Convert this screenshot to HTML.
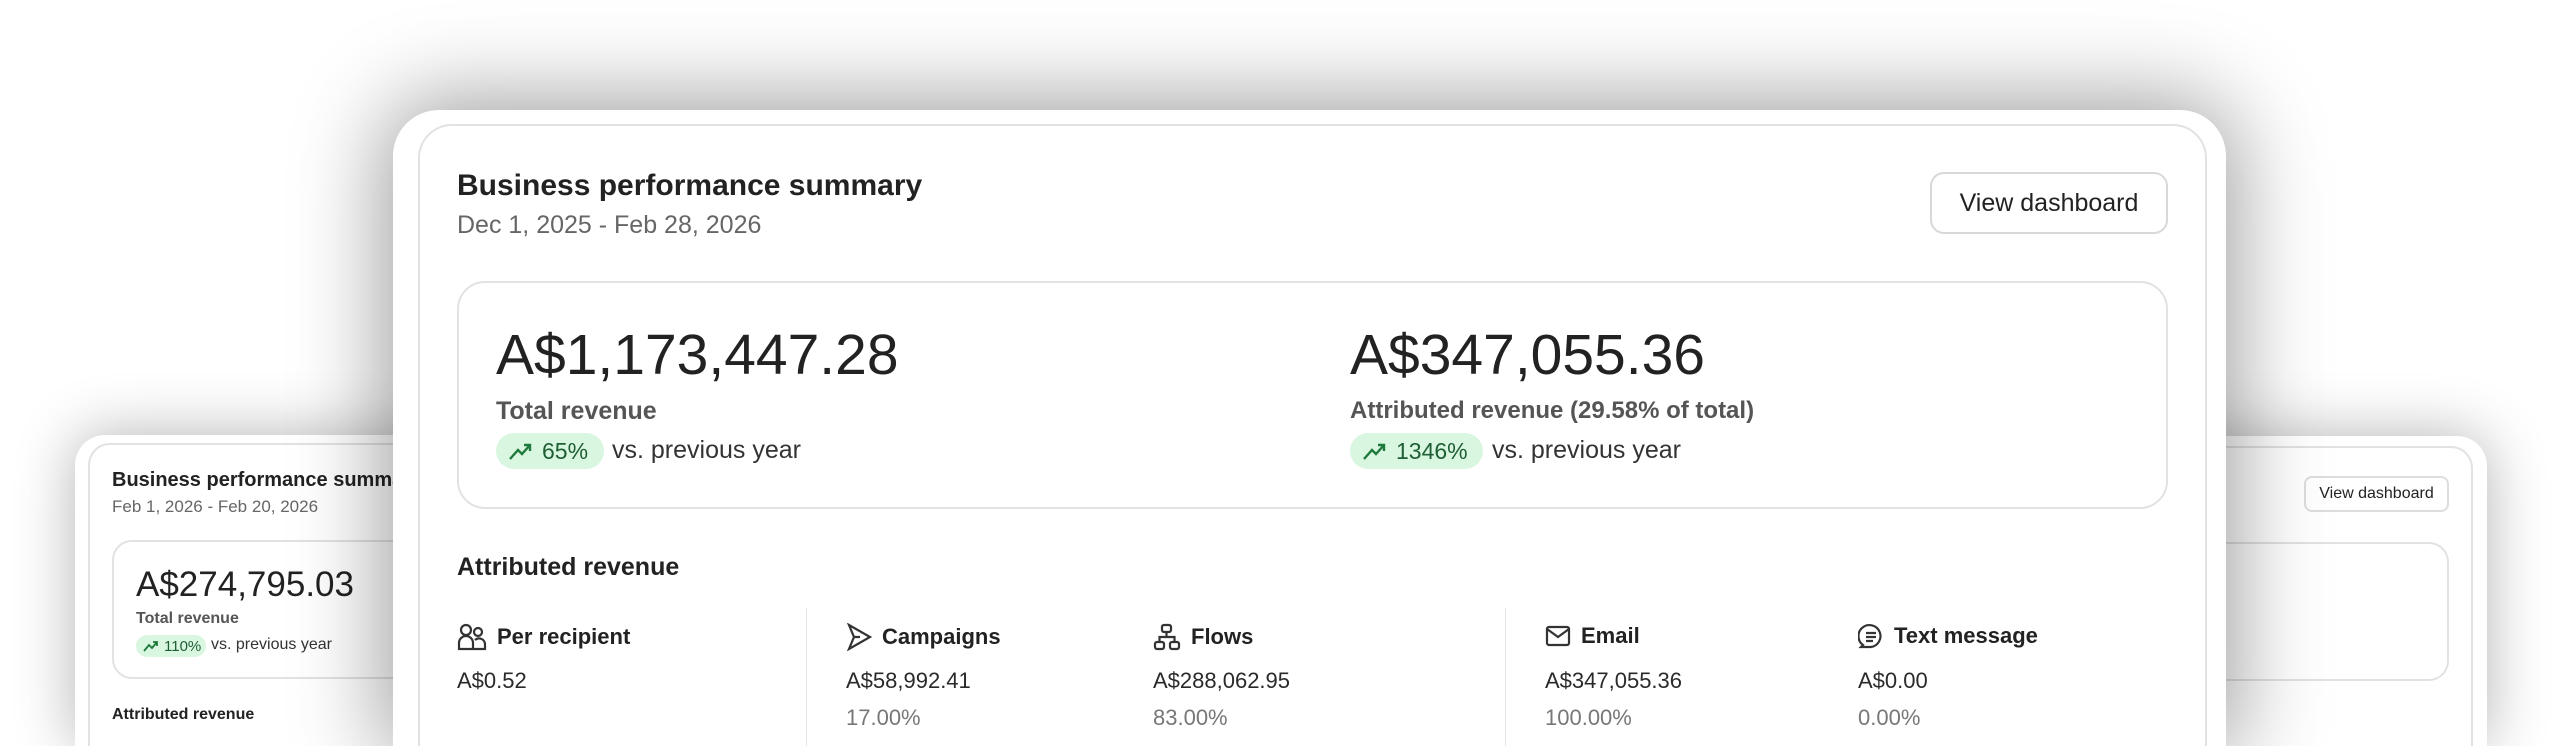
<!DOCTYPE html>
<html><head><meta charset="utf-8"><style>
*{box-sizing:border-box;margin:0;padding:0}
html,body{width:2560px;height:746px;overflow:hidden;background:#fff}
body{font-family:"Liberation Sans",sans-serif;color:#1f1f1f}
#wrap{position:relative;width:2560px;height:746px;overflow:hidden}
.card{position:absolute;background:#fff;border-radius:46px 46px 0 0;}
.inner{position:absolute;border:2px solid #e2e2e2;border-radius:34px;background:#fff}
.innerb{position:absolute;border:2px solid #e2e2e2;border-bottom:none;border-radius:34px 34px 0 0;background:#fff}
.abs{position:absolute;white-space:nowrap}
.pill{position:absolute;background:#d9f6e1;border-radius:20px;color:#1e5e33;display:flex;align-items:center}
.lbl{position:absolute;display:flex;align-items:center;gap:10px;font-size:22px;font-weight:bold;color:#222;white-space:nowrap}
.val{position:absolute;font-size:22px;color:#2a2a2a;white-space:nowrap}
.pct{position:absolute;font-size:22px;color:#777;white-space:nowrap}
</style></head><body><div id="wrap">

<!-- left back card -->
<div class="card" style="left:75px;top:435px;width:700px;height:311px;border-radius:30px 30px 0 0;box-shadow:0 0 60px rgba(0,0,0,0.3);z-index:1">
  <div class="innerb" style="left:13px;top:8px;right:0;bottom:0;border-radius:22px 22px 0 0"></div>
  <div class="abs" style="left:37px;top:34px;font-size:20px;font-weight:bold;color:#222">Business performance summary</div>
  <div class="abs" style="left:37px;top:62px;font-size:17px;color:#666">Feb 1, 2026 - Feb 20, 2026</div>
  <div class="inner" style="left:37px;top:105px;width:600px;height:139px;border-radius:20px"></div>
  <div class="abs" style="left:61px;top:130px;font-size:35px;color:#222">A$274,795.03</div>
  <div class="abs" style="left:61px;top:175px;font-size:16px;color:#555;font-weight:bold">Total revenue</div>
  <div class="pill" style="left:61px;top:200px;width:70px;height:22px;font-size:15px;padding-left:6px">
    <svg width="18" height="14" viewBox="0 0 18 14"><path d="M2 12 L7 6 L10 9 L15 3 M11 3 H15 V7" stroke="#1e7a3c" stroke-width="1.8" fill="none"/></svg><span style="margin-left:4px">110%</span></div>
  <div class="abs" style="left:136px;top:201px;font-size:16px;color:#333">vs. previous year</div>
  <div class="abs" style="left:37px;top:271px;font-size:16px;font-weight:bold;color:#222">Attributed revenue</div>
</div>

<!-- right back card -->
<div class="card" style="left:1800px;top:436px;width:687px;height:310px;border-radius:30px 30px 0 0;box-shadow:0 0 60px rgba(0,0,0,0.3);z-index:1">
  <div class="innerb" style="left:0;top:10px;right:14px;bottom:0;border-radius:22px 22px 0 0"></div>
  <div class="abs" style="left:504px;top:40px;width:145px;height:36px;border:2px solid #ddd;border-radius:8px;font-size:16px;color:#222;display:flex;align-items:center;justify-content:center">View dashboard</div>
  <div class="inner" style="left:0;top:106px;width:649px;height:139px;border-radius:0 20px 20px 0;border-left:none"></div>
</div>

<!-- main card -->
<div class="card" style="left:393px;top:110px;width:1833px;height:636px;box-shadow:0 0 90px 10px rgba(0,0,0,0.38);z-index:2">
  <div class="innerb" style="left:25px;top:14px;width:1789px;height:622px"></div>
  <div class="abs" style="left:64px;top:59px;font-size:30px;font-weight:bold;color:#222">Business performance summary</div>
  <div class="abs" style="left:64px;top:101px;font-size:25px;color:#666">Dec 1, 2025 - Feb 28, 2026</div>
  <div class="abs" style="left:1537px;top:62px;width:238px;height:62px;border:2px solid #d8d8d8;border-radius:14px;font-size:25px;color:#222;display:flex;align-items:center;justify-content:center">View dashboard</div>

  <div class="inner" style="left:64px;top:171px;width:1711px;height:228px;border-radius:28px"></div>
  <div class="abs" style="left:103px;top:212px;font-size:57px;color:#222">A$1,173,447.28</div>
  <div class="abs" style="left:103px;top:287px;font-size:25px;color:#555;font-weight:bold">Total revenue</div>
  <div class="pill" style="left:103px;top:323px;width:108px;height:36px;font-size:23px;padding-left:12px">
    <svg width="26" height="20" viewBox="0 0 26 20"><path d="M2 18 L10 9 L14 13 L22 4 M16 4 H22 V10" stroke="#1e7a3c" stroke-width="2.4" fill="none"/></svg><span style="margin-left:8px">65%</span></div>
  <div class="abs" style="left:219px;top:326px;font-size:25px;color:#333">vs. previous year</div>

  <div class="abs" style="left:957px;top:212px;font-size:57px;color:#222">A$347,055.36</div>
  <div class="abs" style="left:957px;top:287px;font-size:24px;color:#555;font-weight:bold">Attributed revenue (29.58% of total)</div>
  <div class="pill" style="left:957px;top:323px;width:133px;height:36px;font-size:23px;padding-left:12px">
    <svg width="26" height="20" viewBox="0 0 26 20"><path d="M2 18 L10 9 L14 13 L22 4 M16 4 H22 V10" stroke="#1e7a3c" stroke-width="2.4" fill="none"/></svg><span style="margin-left:8px">1346%</span></div>
  <div class="abs" style="left:1099px;top:326px;font-size:25px;color:#333">vs. previous year</div>

  <div class="abs" style="left:64px;top:443px;font-size:25px;font-weight:bold;color:#222">Attributed revenue</div>

  <div style="position:absolute;left:413px;top:498px;width:1px;height:138px;background:#e6e6e6"></div>
  <div style="position:absolute;left:1112px;top:498px;width:1px;height:138px;background:#e6e6e6"></div>

  <div class="lbl" style="left:64px;top:513px"><svg width="30" height="28" viewBox="0 0 30 28" fill="none" stroke="#333" stroke-width="2.2"><circle cx="9" cy="7" r="5"/><circle cx="21" cy="9" r="4"/><path d="M2 26 V20 a7 7 0 0 1 14 0 V26 Z M16 26 H28 V21 a6 6 0 0 0 -10 -4"/></svg>Per recipient</div>
  <div class="val" style="left:64px;top:558px">A$0.52</div>

  <div class="lbl" style="left:453px;top:513px"><svg width="26" height="28" viewBox="0 0 26 28" fill="none" stroke="#333" stroke-width="2.2"><path d="M3 2 L24 14 L3 26 L8 14 Z M8 14 H14"/></svg>Campaigns</div>
  <div class="val" style="left:453px;top:558px">A$58,992.41</div>
  <div class="pct" style="left:453px;top:595px">17.00%</div>

  <div class="lbl" style="left:760px;top:513px"><svg width="28" height="28" viewBox="0 0 28 28" fill="none" stroke="#333" stroke-width="2.2"><rect x="9" y="2" width="9" height="7" rx="2"/><rect x="2" y="19" width="9" height="7" rx="2"/><rect x="17" y="19" width="9" height="7" rx="2"/><path d="M13.5 9 V14 H6.5 V19 M13.5 14 H21.5 V19"/></svg>Flows</div>
  <div class="val" style="left:760px;top:558px">A$288,062.95</div>
  <div class="pct" style="left:760px;top:595px">83.00%</div>

  <div class="lbl" style="left:1152px;top:513px"><svg width="26" height="24" viewBox="0 0 26 24" fill="none" stroke="#333" stroke-width="2.2"><rect x="2" y="3" width="22" height="18" rx="2"/><path d="M2 5 L13 13 L24 5"/></svg>Email</div>
  <div class="val" style="left:1152px;top:558px">A$347,055.36</div>
  <div class="pct" style="left:1152px;top:595px">100.00%</div>

  <div class="lbl" style="left:1465px;top:513px"><svg width="26" height="26" viewBox="0 0 26 26" fill="none" stroke="#333" stroke-width="2.2"><path d="M5 22 A11 11 0 1 1 13 24 H3 Z"/><path d="M8 10 H18 M8 14 H18 M8 18 H15"/></svg>Text message</div>
  <div class="val" style="left:1465px;top:558px">A$0.00</div>
  <div class="pct" style="left:1465px;top:595px">0.00%</div>
</div>
</div></body></html>
